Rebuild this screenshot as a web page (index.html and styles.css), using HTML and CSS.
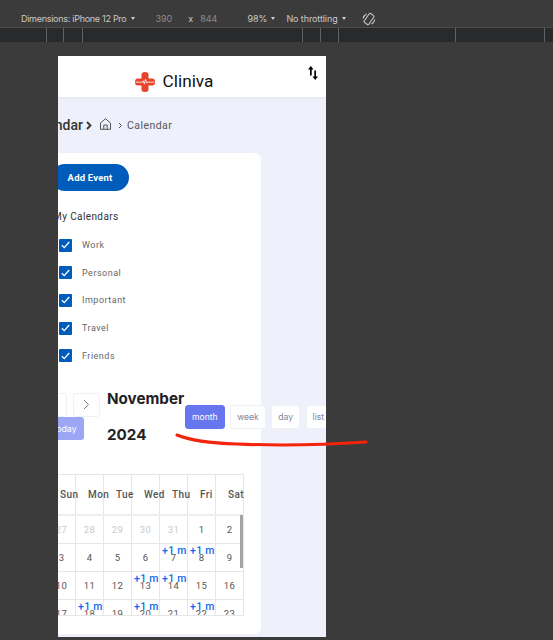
FILE: index.html
```html
<!DOCTYPE html>
<html lang="en">
<head>
    <meta charset="UTF-8">
    <meta name="viewport" content="width=device-width, initial-scale=1.0">
    <title>Cliniva Calendar</title>
    <link rel="stylesheet" href="styles.css">
</head>
<body>
    <div class="device-bar">
        <span class="device-name">Dimensions: iPhone 12 Pro</span><span class="caret caret-name"></span>
        <span class="size size-w">390</span>
        <span class="size-x">x</span>
        <span class="size">844</span>
        <span class="zoom-level">98%</span><span class="caret caret-zoom"></span>
        <span class="throttle">No throttling</span><span class="caret caret-throttle"></span>
        <svg class="rotate-icon" width="14" height="14" viewBox="0 0 14 14" fill="none" stroke="#c8c8c8" stroke-width="1.1">
            <rect x="4.2" y="1.6" width="5.6" height="10.8" rx="1" transform="rotate(35 7 7)"/>
            <path d="M1.2 6.5a6 6 0 0 1 3.4-4.6M12.8 7.5a6 6 0 0 1-3.4 4.6"/>
        </svg>
    </div>
    <div class="ruler">
        <span class="tick t1"></span><span class="tick t2"></span><span class="tick t3"></span><span class="tick t4"></span>
        <span class="tick t5"></span><span class="tick t6"></span><span class="tick t7"></span><span class="tick t8"></span>
    </div>

    <div class="phone">
        <header class="app-header">
            <svg class="logo" width="20" height="20" viewBox="0 0 20 20">
                <path d="M6.500 2.500a3.500 2.500 0 0 1 7 0V6.500h4a2.500 3.500 0 0 1 0 7h-4v4a3.500 2.500 0 0 1-7 0v-4h-4a2.500 3.500 0 0 1 0-7h4z" fill="#e8442b"/>
                <path d="M.5 10.200h6.800l1-1.400 1 3.300 1.200-4.800 1.100 3.800.8-.9h6.800" fill="none" stroke="#fff" stroke-width=".8"/>
            </svg>
            <span class="brand">Cliniva</span>
            <svg class="sort-icon" width="10" height="14" viewBox="0 0 10 14" fill="#000">
                <path d="M2.800 0l2.800 3.600H3.700V9.500H2V3.600H0zM7.200 14l-2.800-3.600h1.900V4.500H8v5.900h2z"/>
            </svg>
        </header>

        <div class="page">
            <nav class="crumbs">
                <span class="crumb-title">Calendar</span>
                <svg class="crumb-sep-bold" width="6" height="9" viewBox="0 0 6 9" fill="none" stroke="#333" stroke-width="1.800"><path d="M1 1l3.500 3.500L1 8"/></svg>
                <svg class="home-icon" width="11" height="12" viewBox="0 0 11 12" fill="none" stroke="#444" stroke-width=".9"><path d="M.5 5L5.500.7 10.500 5v6.300H.5zM3.800 11.300V7h3.400v4.300"/></svg>
                <svg class="crumb-sep" width="5" height="7" viewBox="0 0 5 7" fill="none" stroke="#555" stroke-width="1"><path d="M1 1l2.500 2.500L1 6"/></svg>
                <span class="crumb-now">Calendar</span>
            </nav>

            <section class="card">
                <button class="add-event">Add Event</button>
                <h3 class="side-title">My Calendars</h3>
                <ul class="cal-list">
                    <li><span class="check"><svg width="9" height="8" viewBox="0 0 9 8" fill="none" stroke="#fff" stroke-width="1.300"><path d="M.8 4.200l2.500 2.400L8.200 1"/></svg></span>Work</li>
                    <li><span class="check"><svg width="9" height="8" viewBox="0 0 9 8" fill="none" stroke="#fff" stroke-width="1.300"><path d="M.8 4.200l2.500 2.400L8.200 1"/></svg></span>Personal</li>
                    <li><span class="check"><svg width="9" height="8" viewBox="0 0 9 8" fill="none" stroke="#fff" stroke-width="1.300"><path d="M.8 4.200l2.500 2.400L8.200 1"/></svg></span>Important</li>
                    <li><span class="check"><svg width="9" height="8" viewBox="0 0 9 8" fill="none" stroke="#fff" stroke-width="1.300"><path d="M.8 4.200l2.500 2.400L8.200 1"/></svg></span>Travel</li>
                    <li><span class="check"><svg width="9" height="8" viewBox="0 0 9 8" fill="none" stroke="#fff" stroke-width="1.300"><path d="M.8 4.200l2.500 2.400L8.200 1"/></svg></span>Friends</li>
                </ul>

                <div class="cal-toolbar">
                    <div class="nav-group">
                        <button class="nav-btn"><svg width="7" height="11" viewBox="0 0 7 11" fill="none" stroke="#7b8296" stroke-width="1"><path d="M6 1L1.500 5.500 6 10"/></svg></button>
                        <button class="nav-btn"><svg width="7" height="11" viewBox="0 0 7 11" fill="none" stroke="#7b8296" stroke-width="1"><path d="M1 1l4.500 4.500L1 10"/></svg></button>
                        <button class="today-btn">today</button>
                    </div>
                    <h2 class="cal-title">November 2024</h2>
                    <div class="view-group">
                        <button class="view-btn active">month</button>
                        <button class="view-btn">week</button>
                        <button class="view-btn">day</button>
                        <button class="view-btn">list</button>
                    </div>
                </div>

                <div class="calendar">
                    <div class="cal-grid cal-head">
                        <div class="head-cell">Sun</div><div class="head-cell">Mon</div><div class="head-cell">Tue</div><div class="head-cell">Wed</div><div class="head-cell">Thu</div><div class="head-cell">Fri</div><div class="head-cell">Sat</div>
                    </div>
                    <div class="cal-grid">
                        <div class="day muted">27</div><div class="day muted">28</div><div class="day muted">29</div><div class="day muted">30</div><div class="day muted">31</div><div class="day">1</div><div class="day">2</div>
                        <div class="day">3</div><div class="day">4</div><div class="day">5</div><div class="day">6</div><div class="day">7<span class="more">+1 m</span></div><div class="day">8<span class="more">+1 m</span></div><div class="day">9</div>
                        <div class="day">10</div><div class="day">11</div><div class="day">12</div><div class="day">13<span class="more">+1 m</span></div><div class="day">14<span class="more">+1 m</span></div><div class="day">15</div><div class="day">16</div>
                        <div class="day">17</div><div class="day">18<span class="more">+1 m</span></div><div class="day">19</div><div class="day">20<span class="more">+1 m</span></div><div class="day">21</div><div class="day">22<span class="more">+1 m</span></div><div class="day">23</div>
                    </div>
                    <span class="scroll-thumb"></span>
                </div>
            </section>
        </div>
    </div>

    <!-- red marker line drawn over the screenshot -->
    <svg class="scribble" width="553" height="640" viewBox="0 0 553 640" fill="none">
        <path d="M177 435c12 5 30 8 60 9 45 2 85 1 129-2" stroke="#f3230c" stroke-width="3" stroke-linecap="round"/>
    </svg>
</body>
</html>
```

FILE: styles.css
```css
* {
    box-sizing: border-box;
}
html, body {
    height: 100%;
}
body {
    margin: 0;
    overflow: hidden;
    position: relative;
    background-color: #3b3b3b;
    font-family: Roboto, "Liberation Sans", sans-serif;
}
button {
    font-family: inherit;
    cursor: pointer;
}

/* devtools bar */
.device-bar {
    display: flex;
    align-items: center;
    height: 28px;
    padding: 10px 0 0 21px;
    border-bottom: 1px solid #4c4c4c;
    font-family: Inter, sans-serif;
    font-size: 9px;
    color: #c9c9c9;
}
.device-name {
    letter-spacing: -0.28px;
}
.caret {
    width: 0;
    height: 0;
    border-left: 2.500px solid transparent;
    border-right: 2.500px solid transparent;
    border-top: 3.500px solid #d0d0d0;
}
.caret-name { margin-left: 5px; }
.caret-zoom { margin-left: 4px; }
.caret-throttle { margin-left: 4px; }
.size { color: #8b8b8b; }
.size-w { margin-left: 20px; }
.size-x { margin: 0 7px 0 16px; }
.zoom-level { margin-left: 30px; }
.throttle { margin-left: 11px; letter-spacing: -0.1px; }
.rotate-icon { margin-left: 16px; }

.ruler {
    display: flex;
    height: 14px;
    background-color: #292a2c;
}
.tick {
    border-right: 1px solid #626366;
}
.t1 { width: 47px; }
.t2 { width: 17px; }
.t3 { width: 19px; }
.t4 { width: 220px; }
.t5 { width: 18px; }
.t6 { width: 18px; }
.t7 { width: 117px; }
.t8 { width: 89px; }

/* phone viewport */
.phone {
    width: 268px;
    height: 581px;
    margin: 14px 0 0 58px;
    overflow: hidden;
    background-color: #eef1fb;
}
.app-header {
    position: relative;
    display: flex;
    align-items: center;
    justify-content: center;
    height: 41px;
    padding: 7px 36px 0 0;
    background-color: #fff;
    box-shadow: 0 1px 2px rgba(30, 40, 90, 0.06);
}
.logo {
    margin: 3px 8px 0 0;
}
.brand {
    font-size: 17.200px;
    color: #111;
    margin-top: 2px;
}
.sort-icon {
    position: absolute;
    top: 10px;
    right: 8px;
}

.page {
    width: 320px;
    margin-left: -31px;
}
.crumbs {
    display: flex;
    align-items: center;
    height: 56px;
}
.crumb-title {
    font-size: 14px;
    font-weight: 500;
    color: #333;
}
.crumb-sep-bold { margin-left: 3px; }
.home-icon { margin: -3px 0 0 8px; }
.crumb-sep { margin-left: 7px; }
.crumb-now {
    margin-left: 4px;
    font-size: 10.500px;
    letter-spacing: 0.45px;
    color: #555;
}

.card {
    width: 231px;
    height: 481px;
    margin-left: 3px;
    padding-top: 11px;
    border-radius: 6px;
    background-color: #fff;
}
.add-event {
    display: block;
    width: 78px;
    height: 27px;
    margin-left: 21px;
    border: 0;
    border-radius: 14px;
    background-color: #005cbb;
    color: #fff;
    font-size: 9.500px;
    font-weight: 700;
    letter-spacing: 0.2px;
}
.side-title {
    margin: 20px 0 0 23px;
    font-size: 10px;
    line-height: 12px;
    font-weight: 400;
    letter-spacing: 0.4px;
    color: #333;
}
.cal-list {
    list-style: none;
    margin: 8.500px 0 0 29px;
    padding: 0;
}
.cal-list li {
    display: flex;
    align-items: center;
    height: 27.600px;
    font-size: 9px;
    letter-spacing: 0.5px;
    color: #666;
}
.check {
    display: flex;
    align-items: center;
    justify-content: center;
    width: 13px;
    height: 13px;
    margin-right: 10px;
    border-radius: 1px;
    background-color: #005cbb;
}

.cal-toolbar {
    display: flex;
    align-items: flex-start;
    width: 320px;
    margin: 11.500px 0 0 10px;
}
.nav-group {
    display: flex;
    flex-wrap: wrap;
    align-content: flex-start;
    gap: 0 6px;
    width: 60px;
    margin-top: 12px;
    flex-shrink: 0;
}
.nav-btn {
    display: flex;
    align-items: center;
    justify-content: center;
    width: 27px;
    height: 24px;
    padding: 0;
    border: 1px solid #f1f1f4;
    border-radius: 3px;
    background-color: #fff;
}
.today-btn {
    width: 38px;
    height: 23px;
    margin-left: 6px;
    padding: 0;
    border: 0;
    border-radius: 3px;
    background-color: #9ba7f5;
    color: #fff;
    font-family: Inter, sans-serif;
    font-size: 8.800px;
}
.cal-title {
    flex-shrink: 0;
    width: 78px;
    margin: 0 0 0 7px;
    font-family: Inter, sans-serif;
    font-size: 15.200px;
    line-height: 36px;
    font-weight: 700;
    color: #1f2125;
}
.view-group {
    display: flex;
    gap: 5.500px;
    flex-shrink: 0;
    margin-top: 24px;
}
.view-btn {
    height: 24px;
    padding: 0 6px;
    border: 1px solid #f1f1f4;
    border-radius: 3px;
    background-color: #fff;
    color: #80869c;
    font-family: Inter, sans-serif;
    font-size: 8.600px;
}
.view-btn.active {
    border-color: #6576ee;
    background-color: #6576ee;
    color: #fff;
}

.calendar {
    position: relative;
    width: 196px;
    height: 142px;
    margin: 21px 0 0 18px;
    overflow: hidden;
    border-top: 1px solid #e6e6e6;
    border-bottom: 1px solid #e6e6e6;
}
.cal-grid {
    display: grid;
    grid-template-columns: repeat(7, 28px);
}
.cal-head {
    height: 41px;
    border-bottom: 2px solid #eee;
}
.head-cell {
    padding: 14px 0 0 12px;
    border-right: 1px solid #e6e6e6;
    font-size: 10px;
    font-weight: 500;
    letter-spacing: 0.4px;
    white-space: nowrap;
    color: #555;
}
.day {
    position: relative;
    display: flex;
    align-items: center;
    justify-content: center;
    height: 28px;
    border-right: 1px solid #e6e6e6;
    border-bottom: 1px solid #e6e6e6;
    font-size: 9.500px;
    letter-spacing: 0.3px;
    color: #555;
}
.day.muted {
    color: #c9c9c9;
}
.more {
    position: absolute;
    top: 1px;
    left: 2px;
    font-size: 10.500px;
    line-height: 12px;
    font-weight: 500;
    white-space: nowrap;
    color: #0a6cf0;
}
.scroll-thumb {
    position: absolute;
    top: 40px;
    right: 1px;
    width: 3px;
    height: 53px;
    background-color: #a4a4a4;
}

.scribble {
    position: absolute;
    top: 0;
    left: 0;
    pointer-events: none;
}
```
